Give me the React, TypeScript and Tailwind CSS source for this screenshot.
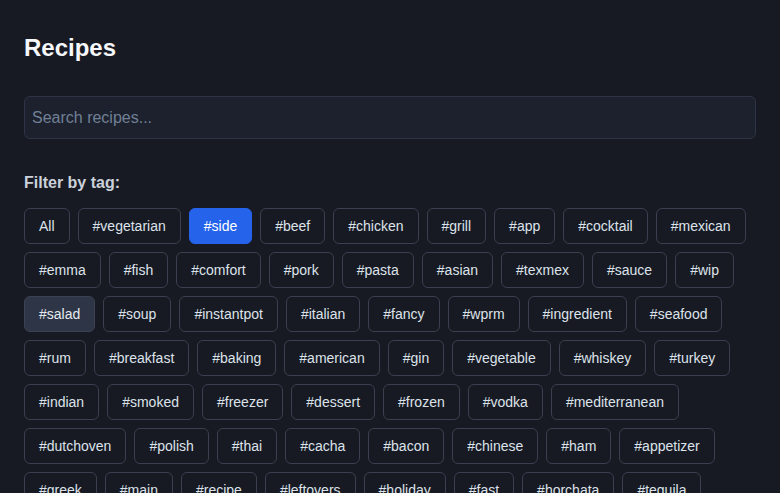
import React from "react";

const tags = [
  "vegetarian","side","beef","chicken","grill","app","cocktail","mexican",
  "emma","fish","comfort","pork","pasta","asian","texmex","sauce","wip",
  "salad","soup","instantpot","italian","fancy","wprm","ingredient","seafood",
  "rum","breakfast","baking","american","gin","vegetable","whiskey","turkey",
  "indian","smoked","freezer","dessert","frozen","vodka","mediterranean",
  "dutchoven","polish","thai","cacha","bacon","chinese","ham","appetizer",
  "greek","main","recipe","leftovers","holiday","fast","horchata","tequila",
  "brunch","vegan","lamb","snack",
];

function Tag({ label, state }: { label: string; state?: "active" | "hover" }) {
  const base =
    "rounded-md border px-[14px] py-[7px] text-[14px] leading-5 whitespace-nowrap";
  const cls =
    state === "active"
      ? "border-[#2563eb] bg-[#2563eb] text-white"
      : state === "hover"
      ? "border-[#3b4252] bg-[#2d3546] text-[#e5e9f0]"
      : "border-[#3b4050] bg-[#171923] text-[#dde3ea]";
  return <button className={`${base} ${cls}`}>{label}</button>;
}

export default function App() {
  return (
    <div
      className="min-h-screen bg-[#181a23] px-6 pt-8"
      style={{ fontFamily: '"Liberation Sans", Arial, sans-serif' }}
    >
      <h1 className="text-[24px] leading-8 font-bold text-[#f5f7fa]">Recipes</h1>
      <input
        className="mt-8 block h-[43px] w-full rounded-md border border-[#2e3445] bg-[#1c212d] px-[7px] text-[16px] text-[#e2e8f0] placeholder:text-[#718096] outline-none"
        placeholder="Search recipes..."
      />
      <div className="mt-[32px] text-[16px] leading-6 font-bold text-[#cbd2dc]">
        Filter by tag:
      </div>
      <div className="mt-[13px] flex flex-wrap gap-2">
        <Tag label="All" />
        {tags.map((t) => (
          <Tag
            key={t}
            label={`#${t}`}
            state={t === "side" ? "active" : t === "salad" ? "hover" : undefined}
          />
        ))}
      </div>
    </div>
  );
}
